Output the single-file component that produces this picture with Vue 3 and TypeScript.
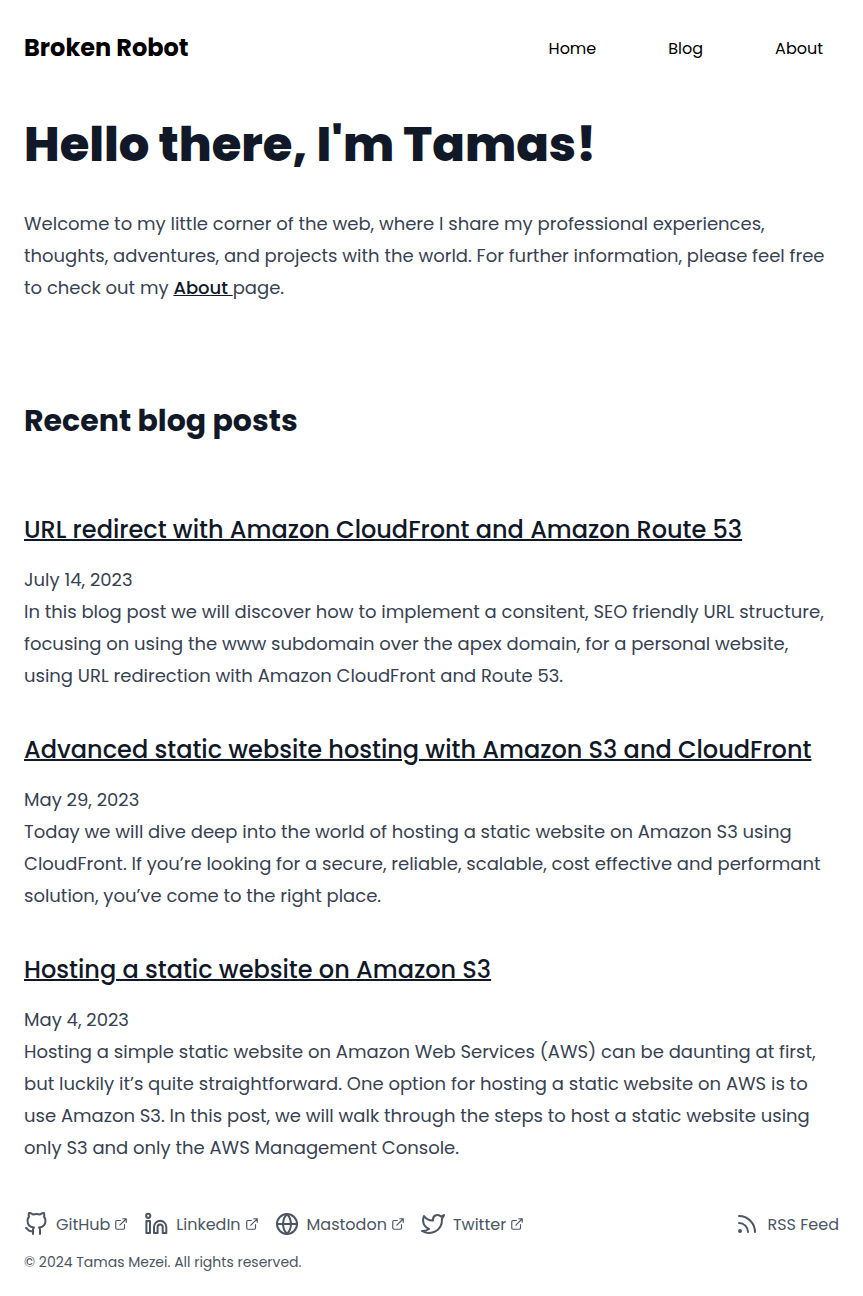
<script setup lang="ts">
interface Post {
  title: string
  date: string
  summary: string
}

interface Social {
  label: string
  shapes: string[]
}

const navigation: string[] = ['Home', 'Blog', 'About']

const posts: Post[] = [
  {
    title: 'URL redirect with Amazon CloudFront and Amazon Route 53',
    date: 'July 14, 2023',
    summary:
      'In this blog post we will discover how to implement a consitent, SEO friendly URL structure, focusing on using the www subdomain over the apex domain, for a personal website, using URL redirection with Amazon CloudFront and Route 53.',
  },
  {
    title: 'Advanced static website hosting with Amazon S3 and CloudFront',
    date: 'May 29, 2023',
    summary:
      'Today we will dive deep into the world of hosting a static website on Amazon S3 using CloudFront. If you’re looking for a secure, reliable, scalable, cost effective and performant solution, you’ve come to the right place.',
  },
  {
    title: 'Hosting a static website on Amazon S3',
    date: 'May 4, 2023',
    summary:
      'Hosting a simple static website on Amazon Web Services (AWS) can be daunting at first, but luckily it’s quite straightforward. One option for hosting a static website on AWS is to use Amazon S3. In this post, we will walk through the steps to host a static website using only S3 and only the AWS Management Console.',
  },
]

const socials: Social[] = [
  {
    label: 'GitHub',
    shapes: [
      'M9 19c-5 1.5-5-2.5-7-3m14 6v-3.87a3.37 3.37 0 0 0-.94-2.61c3.14-.35 6.44-1.54 6.44-7A5.44 5.44 0 0 0 20 4.77 5.07 5.07 0 0 0 19.91 1S18.73.65 16 2.48a13.38 13.38 0 0 0-7 0C6.27.65 5.09 1 5.09 1A5.07 5.07 0 0 0 5 4.77a5.44 5.44 0 0 0-1.5 3.78c0 5.42 3.3 6.61 6.44 7A3.37 3.37 0 0 0 9 18.13V22',
    ],
  },
  {
    label: 'LinkedIn',
    shapes: [
      'M10 21v-6a6.15 6.15 0 0 1 12.3 0v6h-3.6v-6a2.55 2.55 0 0 0-5.1 0v6z',
      'M2.4 9h3.6v12H2.4z',
      'M6.3 3.8a2.1 2.1 0 1 1-4.2 0a2.1 2.1 0 1 1 4.2 0z',
    ],
  },
  {
    label: 'Mastodon',
    shapes: [
      'M22 12a10 10 0 1 1-20 0a10 10 0 1 1 20 0z',
      'M2 12h20',
      'M12 2a15.3 15.3 0 0 1 4 10 15.3 15.3 0 0 1-4 10 15.3 15.3 0 0 1-4-10 15.3 15.3 0 0 1 4-10z',
    ],
  },
  {
    label: 'Twitter',
    shapes: [
      'M23 3a10.9 10.9 0 0 1-3.14 1.53 4.48 4.48 0 0 0-7.86 3v1A10.66 10.66 0 0 1 3 4s-4 9 5 13a11.64 11.64 0 0 1-7 2c9 5 20 0 20-11.5a4.5 4.5 0 0 0-.08-.83A7.72 7.72 0 0 0 23 3z',
    ],
  },
]
</script>

<template>
  <div class="page">
    <header class="header">
      <a class="brand">Broken Robot</a>
      <nav class="nav">
        <a v-for="item in navigation" :key="item" class="nav-link">{{ item }}</a>
      </nav>
    </header>

    <main class="prose">
      <h1>Hello there, I'm Tamas!</h1>
      <p class="intro">
        Welcome to my little corner of the web, where I share my professional experiences, thoughts,
        adventures, and projects with the world. For further information, please feel free to check
        out my <a class="text-link">About&#32;</a>page.
      </p>
      <h2>Recent blog posts</h2>
      <article v-for="post in posts" :key="post.title" class="post">
        <h3><a class="text-link">{{ post.title }}</a></h3>
        <time class="date">{{ post.date }}</time>
        <p>{{ post.summary }}</p>
      </article>
    </main>

    <footer class="footer">
      <div class="links">
        <a v-for="social in socials" :key="social.label" class="footer-link">
          <svg class="icon" viewBox="0 0 24 24">
            <path v-for="shape in social.shapes" :key="shape" :d="shape" />
          </svg>
          <span class="label">{{ social.label }}</span>
          <svg class="external" viewBox="0 0 24 24">
            <path d="M18 13v6a2 2 0 0 1-2 2H5a2 2 0 0 1-2-2V8a2 2 0 0 1 2-2h6M15 3h6v6M10 14L21 3" />
          </svg>
        </a>
        <a class="footer-link feed">
          <svg class="icon" viewBox="0 0 24 24">
            <path d="M4 11a9 9 0 0 1 9 9M4 4a16 16 0 0 1 16 16M6 19a1 1 0 1 1-2 0a1 1 0 1 1 2 0z" />
          </svg>
          <span class="label">RSS Feed</span>
        </a>
      </div>
      <p class="copyright">© 2024 Tamas Mezei. All rights reserved.</p>
    </footer>
  </div>
</template>

<style>
body {
  background: #fff;
}
</style>

<style scoped>
.page {
  box-sizing: border-box;
  min-height: 1296px;
  padding: 0 24px;
  font-family: Poppins, Inter, 'Open Sans', sans-serif;
  font-size: 16px;
  line-height: 24px;
  color: #000;
}

.header {
  display: flex;
  align-items: center;
  justify-content: space-between;
  height: 96px;
}

.brand {
  font-size: 24px;
  font-weight: 700;
  line-height: 32px;
}

.nav {
  display: flex;
  gap: 40px;
}

.nav-link {
  padding: 10px 16px 8px;
}

.prose {
  padding-top: 24px;
  font-size: 18px;
  line-height: 32px;
  color: #374151;
}

h1,
h2,
h3,
p {
  margin: 0;
}

h1,
h2,
h3,
.text-link {
  color: #111827;
}

h1 {
  margin-bottom: 38px;
  font-size: 48px;
  font-weight: 800;
  line-height: 50px;
}

h2 {
  margin: 96px 0 70px;
  font-size: 30px;
  font-weight: 700;
  line-height: 42px;
}

h3 {
  margin-bottom: 16px;
  font-size: 24px;
  font-weight: 500;
  line-height: 36px;
}

.text-link {
  font-weight: 500;
  text-decoration: underline;
  white-space: pre-wrap;
}

h3 .text-link {
  text-decoration-thickness: 2px;
  text-underline-offset: 1px;
}

.post + .post {
  margin-top: 40px;
}

.date {
  display: block;
}

.footer {
  padding-top: 47px;
  color: #4b5563;
}

.links {
  display: flex;
  gap: 16px;
}

.footer-link {
  display: flex;
  align-items: center;
}

.label {
  padding-top: 2px;
}

.feed {
  margin-left: auto;
}

.icon,
.external {
  flex: none;
  fill: none;
  stroke: currentColor;
  stroke-width: 2;
  stroke-linecap: round;
  stroke-linejoin: round;
}

.icon {
  width: 24px;
  height: 24px;
  margin-right: 8px;
}

.external {
  width: 14px;
  height: 14px;
  margin-left: 4px;
}

.copyright {
  margin-top: 15px;
  font-size: 14px;
  line-height: 20px;
}
</style>
